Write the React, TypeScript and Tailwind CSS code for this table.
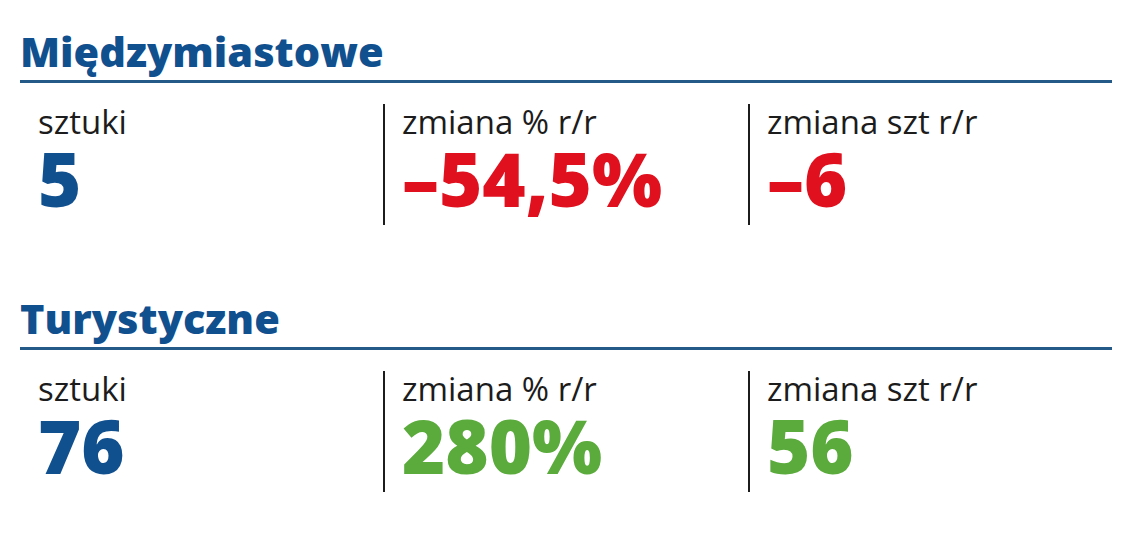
const sections = [
  {
    title: "Międzymiastowe",
    stats: [
      { label: "sztuki", value: "5", color: "text-[#11508f]" },
      { label: "zmiana % r/r", value: "–54,5%", color: "text-[#e0101e]" },
      { label: "zmiana szt r/r", value: "–6", color: "text-[#e0101e]" },
    ],
  },
  {
    title: "Turystyczne",
    stats: [
      { label: "sztuki", value: "76", color: "text-[#11508f]" },
      { label: "zmiana % r/r", value: "280%", color: "text-[#5aab3c]" },
      { label: "zmiana szt r/r", value: "56", color: "text-[#5aab3c]" },
    ],
  },
];

const App = () => {
  return (
    <main className="w-[1140px] h-[554px] bg-white pl-[20px] pt-[27px] font-['Open_Sans',sans-serif] overflow-hidden">
      <div className="w-[1092px] flex flex-col gap-[69px]">
        {sections.map(({ title, stats }) => (
          <section key={title}>
            <h2 className="text-[41.5px] leading-[48px] font-extrabold text-[#11508f] pb-[5px] border-b-[3px] border-[#235a88]">
              {title}
            </h2>
            <div className="grid grid-cols-[363px_365px_1fr] mt-[21px] h-[121px]">
              {stats.map(({ label, value, color }, i) => (
                <div
                  key={label}
                  className={i === 0 ? "pl-[18px]" : "pl-[17px] border-l-2 border-[#1c1c1c]"}
                >
                  <p className="text-[33px] leading-[36px] text-[#1c1c1c]">{label}</p>
                  <p className={`text-[74px] leading-[72px] font-extrabold mt-[3px] ${color}`}>{value}</p>
                </div>
              ))}
            </div>
          </section>
        ))}
      </div>
    </main>
  );
};

export default App;
